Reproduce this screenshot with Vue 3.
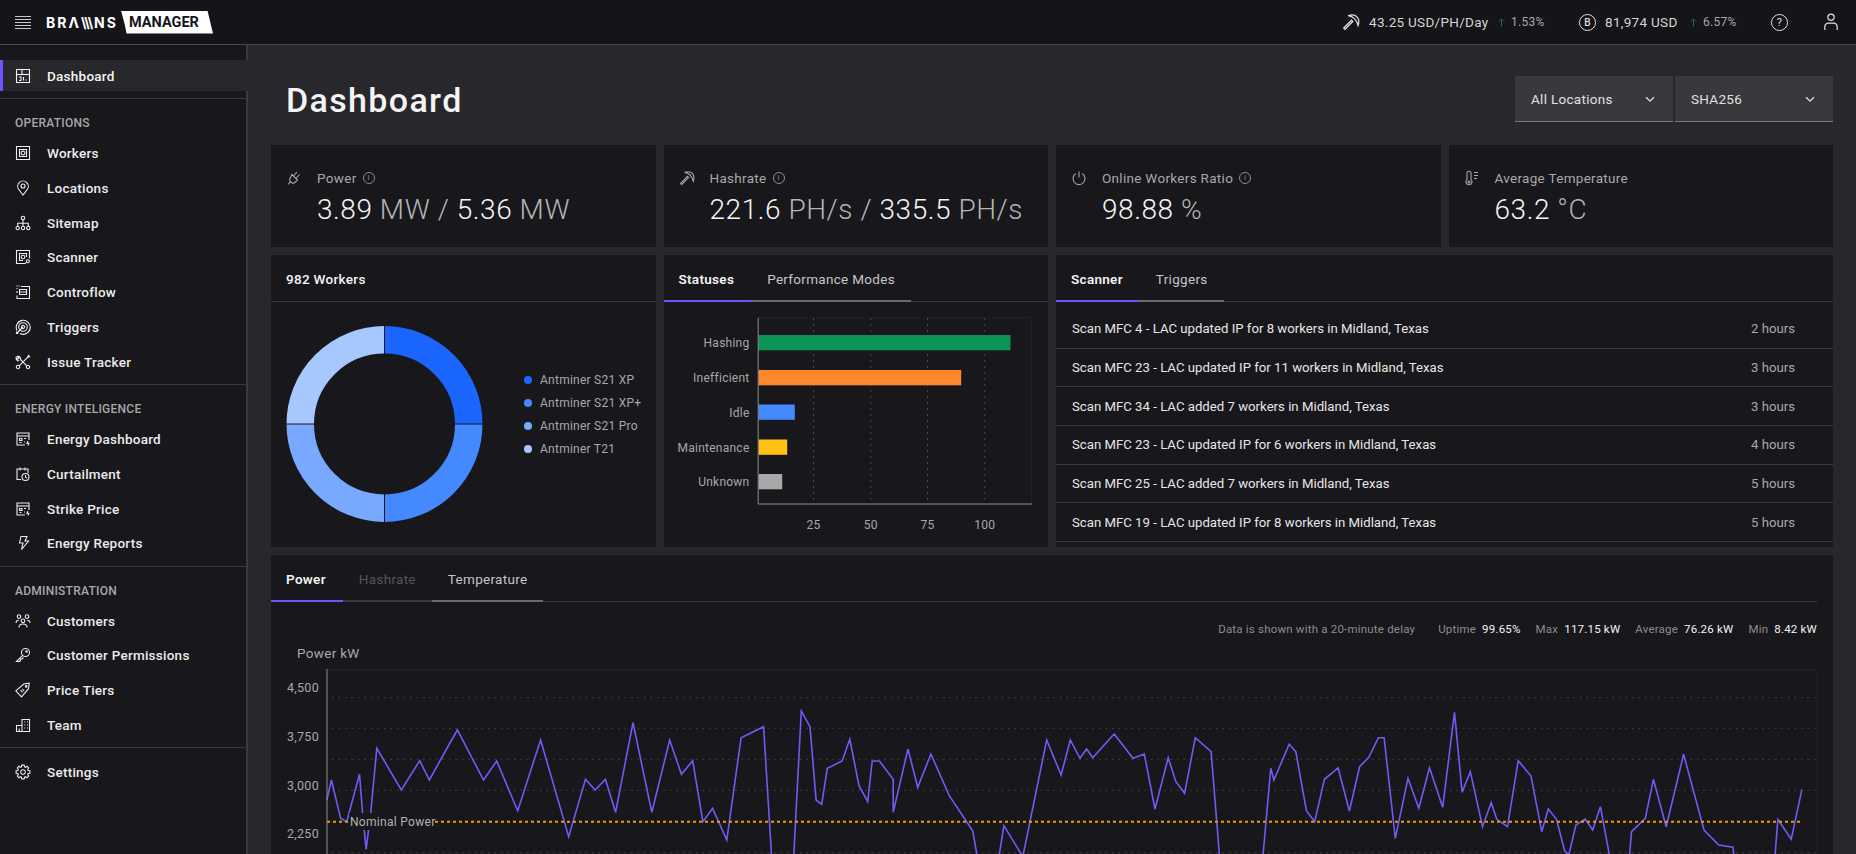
<script setup>
import { h } from 'vue'

const c = (x, y, r) => `M${x - r} ${y}a${r} ${r} 0 1 0 ${2 * r} 0a${r} ${r} 0 1 0 ${-2 * r} 0`
const gear = () => {
  let d = ''
  for (let i = 0; i < 8; i++) {
    const a = (i * Math.PI) / 4
    const pts = [[-0.3, 5.3], [-0.17, 7], [0.17, 7], [0.3, 5.3]]
    pts.forEach(([o, r]) => {
      d += (d ? 'L' : 'M') + (8 + r * Math.cos(a + o)).toFixed(2) + ' ' + (8 + r * Math.sin(a + o)).toFixed(2)
    })
  }
  return d + 'z'
}
const energy = ['M14 9V2H2v12h8', 'M2 5h12', 'M4.5 7.5h2.5v2h-2.5zM4.5 11.5h2M9 7.5h2M9 11h1', 'M13 10l-1.2 2.2h2.2L12.8 14.5']
const icons = {
  dashboard: ['M1.5 1.5h13v13h-13z', 'M1.5 6.5h13', 'M7 1.5v5', 'M4 12.5h2v-3.5H4M8.5 12.5V9M11 12.5v-1'],
  workers: ['M1.5 1.5h13v13h-13z', 'M4.5 4.5h7v7h-7z', c(8, 8, 1.9)],
  pin: ['M8 15L3.8 9.5A5.3 5.3 0 1 1 12.2 9.5z', c(8, 6, 2)],
  sitemap: [c(8, 3, 1.7), c(2.7, 13, 1.7), c(8, 13, 1.7), c(13.3, 13, 1.7), 'M8 4.7v6.6M2.7 11.3V8.3h10.6v3'],
  scanner: ['M10 14.5H1.5v-13h13v8', 'M11.5 8V4.5h-7v7H8', c(8, 8, 1.8), c(12.8, 12.3, 1.5), 'M11.6 13.4l-1.6 1.2'],
  flow: ['M6 2.5h8.5v12H2v-3', 'M2 9V7M2 5V4M2 2.5v-1M4 1.5v1', 'M4.5 5.5h7V8h-7zM4.5 8h7v2.5h-7z'],
  target: ['M2 11.5A7 7 0 1 1 5 14.5', c(8, 8, 4.3), c(8, 8, 1.6), 'M8 8L1.5 14.5M1.5 12.5v2h2'],
  tools: ['M4.2 11.8L12.5 3.5l1-2 1 1-2 1', 'M11.8 11.8L5.5 5.5c.5-2-1-3.5-3.2-3.2l1.7 1.7-1.2 1.2-1.7-1.7c-.3 2.2 1.2 3.7 3.2 3.2', c(3, 13, 1.7), c(13, 13, 1.7)],
  energy,
  curtail: ['M6 13.5H2V3h11v4', 'M5 1.5v3M10 1.5v3', c(10.5, 11, 3.5), 'M10.5 9v2.2l1.5.8'],
  bolt: ['M6 1.5h6L10 6h3.5L6.5 14.5l1.5-6.5H4.5z'],
  customers: [c(4, 3.6, 1.8), c(12, 3.6, 1.8), c(8, 7.8, 1.8), 'M1 10c0-1.7 1.2-2.8 2.8-2.8', 'M15 10c0-1.7-1.2-2.8-2.8-2.8', 'M4 14.5c0-2.4 1.8-3.5 4-3.5s4 1.1 4 3.5'],
  key: [c(10.5, 5.5, 4), 'M7.6 8.4L1.5 14.5H4.5l1-1V12H7l1.5-1.5', c(11.5, 4.5, 0.8)],
  tag: ['M0.8 8.8L8.8 2l5.4-.8-.7 5.5-7 8.2z', c(11.2, 4.4, 0.8), 'M5.5 8.2l2 2.2M7.2 6.8l2 2.2'],
  team: ['M1.5 14.5V8.5H7v6zM7 14.5V2.5h7.5v12zM9.3 5h1M12 5h1M9.3 8h1M12 8h1M9.3 11h1M12 11h1M4.2 14.5v-3'],
  gear: [gear(), c(8, 8, 2.3)],
  pick: ['M1.5 13.4l1.1 1.1L9.6 7.5 8.5 6.4z', 'M5.5 2.4c3.4-1.2 6.4-.4 7.8 1 1.4 1.4 2.2 4.4 1 7.8-.6-2.6-1.8-4.7-3.2-6.2C9.6 3.6 8 2.8 5.5 2.4z'],
  plug: ['M6 4.5l5.5 5.5-2 2c-1.5 1.5-3.5 1.2-4.8 0s-1.5-3.3 0-4.8z', 'M4.5 11.5l-2.5 3', 'M7.5 6L11 2M10 8.5l3.5-4'],
  power: ['M8 1.5v6', 'M4.8 3.5a6 6 0 1 0 6.4 0'],
  temp: ['M3 9.5V3.2a2 2 0 0 1 4 0v6.3a3 3 0 1 1-4 0z', c(5, 12, 1), 'M10 2.5h4M10 5.5h4M10 8.5h3'],
  user: [c(8, 3.8, 2.8), 'M2.5 15v-2.5c0-2 1.5-3.5 3.5-3.5h4c2 0 3.5 1.5 3.5 3.5V15'],
  chevron: ['M3.5 6L8 10.5 12.5 6'],
  up: ['M8 14V3M4 7l4-4 4 4'],
}
const Ico = (props) =>
  h('svg', { viewBox: '0 0 16 16', width: props.size || 16, height: props.size || 16, fill: 'none', stroke: 'currentColor', 'stroke-width': props.sw || 1.1, class: 'ico' },
    icons[props.name].map((d) => h('path', { d })))

const sections = [
  { label: 'OPERATIONS', items: [['workers', 'Workers'], ['pin', 'Locations'], ['sitemap', 'Sitemap'], ['scanner', 'Scanner'], ['flow', 'Controflow'], ['target', 'Triggers'], ['tools', 'Issue Tracker']] },
  { label: 'ENERGY INTELIGENCE', items: [['energy', 'Energy Dashboard'], ['curtail', 'Curtailment'], ['energy', 'Strike Price'], ['bolt', 'Energy Reports']] },
  { label: 'ADMINISTRATION', items: [['customers', 'Customers'], ['key', 'Customer Permissions'], ['tag', 'Price Tiers'], ['team', 'Team']] },
]
const metrics = [
  { icon: 'plug', label: 'Power', info: true, parts: [['3.89', ' MW / '], ['5.36', ' MW']] },
  { icon: 'pick', label: 'Hashrate', info: true, parts: [['221.6', ' PH/s / '], ['335.5', ' PH/s']] },
  { icon: 'power', label: 'Online Workers Ratio', info: true, parts: [['98.88', ' %']] },
  { icon: 'temp', label: 'Average Temperature', info: false, parts: [['63.2', ' °C']] },
]
const legend = [['#1a66ff', 'Antminer S21 XP'], ['#4589ff', 'Antminer S21 XP+'], ['#78a9ff', 'Antminer S21 Pro'], ['#a6c8ff', 'Antminer T21']]
const arc = (a, b) => {
  const R = 84.25, p = (t) => `${(384.5 + R * Math.sin(t)).toFixed(2)} ${(424 - R * Math.cos(t)).toFixed(2)}`
  return `M${p(a)}A${R} ${R} 0 0 1 ${p(b)}`
}
const donut = legend.map(([col], i) => ({ col, d: arc((i * Math.PI) / 2, ((i + 1) * Math.PI) / 2) }))
const bars = [
  ['Hashing', 1010, 335, '#0b9455'],
  ['Inefficient', 960.7, 370, '#ff882b'],
  ['Idle', 794.3, 404.5, '#4589ff'],
  ['Maintenance', 786.7, 439.5, '#ffc212'],
  ['Unknown', 781.7, 474, '#a8a8a8'],
]
const xticks = [[813, '25'], [870.3, '50'], [927, '75'], [984.3, '100']]
const scans = [
  ['Scan MFC 4 - LAC updated IP for 8 workers in Midland, Texas', '2 hours'],
  ['Scan MFC 23 - LAC updated IP for 11 workers in Midland, Texas', '3 hours'],
  ['Scan MFC 34 - LAC added 7 workers in Midland, Texas', '3 hours'],
  ['Scan MFC 23 - LAC updated IP for 6 workers in Midland, Texas', '4 hours'],
  ['Scan MFC 25 - LAC added 7 workers in Midland, Texas', '5 hours'],
  ['Scan MFC 19 - LAC updated IP for 8 workers in Midland, Texas', '5 hours'],
]
const stats = [['Uptime', '99.65%'], ['Max', '117.15 kW'], ['Average', '76.26 kW'], ['Min', '8.42 kW']]

const z8 = [[131,750],[140,690],[158,805],[170,815],[195,673],[201,790],[208,898],[217,790],[229,595],[277,720],[313,632],[332,690],[370,585],[387,540],[438,690],[464,633],[505,782],[550,570],[605,860],[638,688],[657,720],[677,688],[697,787],[731,518],[768,787],[803,570],[826,673],[848,632],[868,815],[887,775],[915,870],[943,563],[987,530],[1010,1100],[1040,1100],[1061,483],[1078,530],[1090,750],[1101,763],[1112,655],[1141,633],[1156,568],[1174,707],[1191,755],[1200,633],[1214,633],[1241,688],[1241,787],[1270,597],[1289,712],[1315,612],[1351,737],[1397,843],[1415,1000],[1440,1000],[1458,827],[1495,920],[1542,570]]
const z9 = [[10,675],[28,570],[47,625],[60,597],[72,623],[114,552],[151,625],[173,612],[194,777],[220,623],[235,695],[252,730],[273,563],[304,605],[330,1100],[395,1100],[421,655],[427,690],[457,583],[470,605],[491,783],[507,815],[526,688],[553,654],[575,783],[595,650],[613,622],[632,563],[643,563],[665,865],[690,685],[711,775],[732,653],[758,772],[781,487],[796,727],[812,665],[836,830],[853,758],[864,808],[885,830],[906,632],[931,678],[952,845],[965,777],[981,808],[997,903],[1005,915],[1019,825],[1037,807],[1052,840],[1067,770],[1095,1000],[1120,1000],[1128,845],[1155,805],[1171,688],[1196,830],[1230,613],[1270,840],[1299,885],[1327,892],[1335,1000],[1405,1000],[1415,808],[1441,868],[1462,718]]
const linePts = [
  ...z8.map(([x, y]) => `${(260 + x / 1.96).toFixed(1)},${(550 + y / 3).toFixed(1)}`),
  ...z9.map(([x, y]) => `${(1056 + x / 1.96).toFixed(1)},${(550 + y / 3).toFixed(1)}`),
].join(' ')
const yticks = [[687.7, '4,500'], [736, '3,750'], [785, '3,000'], [833, '2,250']]
const grid = [697.7, 728.3, 759.3, 790.3, 821.7, 852.7]
</script>

<template>
  <div class="app">
    <header class="topbar">
      <svg class="burger" viewBox="0 0 16 13" width="16" height="13" stroke="#c6c6c6" stroke-width="1"><path d="M0 .5h16M0 3.5h16M0 6.5h16M0 9.5h16M0 12.5h16" /></svg>
      <span class="logo">BRΛ<span class="slashes">\\\</span>NS</span>
      <span class="manager">MANAGER</span>
      <div class="ticker">
        <Ico name="pick" :size="18" class="tick-ico" />
        <span class="tick-val">43.25 USD/PH/Day</span>
        <Ico name="up" :size="11" class="tick-up" />
        <span class="tick-pct">1.53%</span>
        <span class="coin">B</span>
        <span class="tick-val">81,974 USD</span>
        <Ico name="up" :size="11" class="tick-up" />
        <span class="tick-pct">6.57%</span>
        <span class="help">?</span>
        <Ico name="user" :size="18" class="tick-user" />
      </div>
    </header>
    <div class="body">
      <aside class="sidebar">
        <div class="top-group">
          <a class="nav active"><Ico name="dashboard" /><span>Dashboard</span></a>
        </div>
        <section v-for="s in sections" :key="s.label" class="group">
          <h4>{{ s.label }}</h4>
          <a v-for="it in s.items" :key="it[1]" class="nav"><Ico :name="it[0]" /><span>{{ it[1] }}</span></a>
        </section>
        <div class="last-group">
          <a class="nav"><Ico name="gear" /><span>Settings</span></a>
        </div>
      </aside>
      <main class="main">
        <div class="head">
          <h1>Dashboard</h1>
          <div class="selects">
            <div class="select"><span>All Locations</span><Ico name="chevron" :size="14" :sw="1.5" /></div>
            <div class="select"><span>SHA256</span><Ico name="chevron" :size="14" :sw="1.5" /></div>
          </div>
        </div>
        <div class="grid-4">
          <div v-for="m in metrics" :key="m.label" class="card metric">
            <Ico :name="m.icon" class="m-ico" />
            <div>
              <div class="m-label">{{ m.label }}<span v-if="m.info" class="info">i</span></div>
              <div class="m-value"><template v-for="(p, i) in m.parts" :key="i"><span class="w">{{ p[0] }}</span><span class="g">{{ p[1] }}</span></template></div>
            </div>
          </div>
        </div>
        <div class="grid-row2">
          <div class="card">
            <div class="card-title">982 Workers</div>
            <div class="donut-wrap">
              <svg class="donut" viewBox="286 326 197 197" width="197" height="197">
                <path v-for="d in donut" :key="d.col" :d="d.d" fill="none" :stroke="d.col" stroke-width="27.5" />
                <path d="M384.5 326v28M384.5 494v29M286 424h28M455 424h28" stroke="#18171b" stroke-width="1" />
              </svg>
              <ul class="legend">
                <li v-for="l in legend" :key="l[1]"><i :style="{ background: l[0] }"></i>{{ l[1] }}</li>
              </ul>
            </div>
          </div>
          <div class="card">
            <div class="tabs">
              <span class="tab on">Statuses</span>
              <span class="tab line">Performance Modes</span>
            </div>
            <svg class="bar-svg" viewBox="663.5 302 385 245" width="385" height="245">
              <path d="M757.7 317.7H1031V504" stroke="#232226" fill="none" />
              <path v-for="t in xticks" :key="t[1]" :d="`M${t[0]} 318V504`" stroke="#4a494d" stroke-dasharray="2 4" />
              <rect v-for="b in bars" :key="b[0]" :x="758" :y="b[2]" :width="b[1] - 758" height="15.3" :fill="b[3]" />
              <path d="M757.7 317.7V504H1031.5" stroke="#8d8d8d" fill="none" />
              <text v-for="b in bars" :key="b[0] + 't'" x="749" :y="b[2] + 12" text-anchor="end" class="st">{{ b[0] }}</text>
              <text v-for="t in xticks" :key="t[1] + 't'" :x="t[0]" y="529" text-anchor="middle" class="st">{{ t[1] }}</text>
            </svg>
          </div>
          <div class="card span2">
            <div class="tabs">
              <span class="tab on">Scanner</span>
              <span class="tab line">Triggers</span>
            </div>
            <div class="scan-list">
              <div v-for="(s, i) in scans" :key="i" class="scan"><span>{{ s[0] }}</span><span class="time">{{ s[1] }}</span></div>
            </div>
          </div>
        </div>
        <div class="card power">
          <div class="tabs wide">
            <span class="tab on">Power</span>
            <span class="tab off">Hashrate</span>
            <span class="tab line">Temperature</span>
          </div>
          <div class="stats">
            <span class="note">Data is shown with a 20-minute delay</span>
            <span v-for="s in stats" :key="s[0]" class="stat">{{ s[0] }} <b>{{ s[1] }}</b></span>
          </div>
          <div class="chart-title">Power kW</div>
          <svg class="line-svg" viewBox="271 669 1562 190" width="1562" height="190">
            <path d="M327 669.5H1813a4 4 0 0 1 4 4V860" fill="none" stroke="#242327" />
            <path v-for="y in grid.filter((g) => g !== 821.7)" :key="y" :d="`M332 ${y}H1817`" stroke="#4a494d" stroke-dasharray="1.5 5" />
            <polyline :points="linePts" fill="none" stroke="#6d5cf6" stroke-width="1.6" stroke-linejoin="miter" />
            <path d="M327 821.7H1802" stroke="#e3a008" stroke-width="2" stroke-dasharray="3 3" />
            <rect x="349" y="813" width="85" height="17" fill="#18171b" />
            <text x="350" y="826" class="nominal">Nominal Power</text>
            <path d="M327 669V860" stroke="#8d8d8d" />
            <text v-for="t in yticks" :key="t[1]" x="319" :y="t[0] + 4.5" text-anchor="end" class="yt">{{ t[1] }}</text>
          </svg>
        </div>
      </main>
    </div>
  </div>
</template>

<style>
html, body { margin: 0; background: #28272b; overflow: hidden; }
</style>

<style scoped>
.app { width: 1856px; height: 854px; overflow: hidden; display: flex; flex-direction: column; background: #28272b; color: #f4f4f4; font-family: Roboto, "Liberation Sans", sans-serif; letter-spacing: .3px; }
.ico { display: block; flex: none; }
.topbar { height: 45px; box-sizing: border-box; flex: none; background: #151418; border-bottom: 1px solid #49484c; display: flex; align-items: center; padding-left: 15px; position: relative; }
.burger { margin-right: 15px; }
.logo { font-family: Inter, sans-serif; font-weight: 700; font-size: 14px; letter-spacing: 2px; color: #fff; width: 75px; white-space: nowrap; }
.slashes { letter-spacing: -1.3px; margin-right: 2px; }
.manager { background: #fff; color: #151418; font-weight: 700; font-size: 14.5px; letter-spacing: 0; height: 23px; width: 92px; box-sizing: border-box; padding: 1px 0 0 8px; line-height: 22px; clip-path: polygon(0 0, 94% 0, 100% 100%, 6% 100%, 4% 60%); }
.ticker { margin-left: auto; display: flex; align-items: center; color: #d4d4d4; font-size: 13.5px; }
.tick-ico { margin-right: 9px; color: #e0e0e0; }
.tick-val { width: 118px; white-space: nowrap; }
.tick-up { color: #0e8a50; margin: 0 4px 0 9px; }
.tick-pct { font-size: 12px; color: #a8a8a8; width: 35px; white-space: nowrap; }
.coin, .help { width: 15px; height: 15px; border: 1px solid #e0e0e0; border-radius: 50%; display: flex; align-items: center; justify-content: center; color: #e0e0e0; }
.coin { font-size: 10px; font-weight: 500; margin: 0 9px 0 33px; }
.coin + .tick-val { width: 74px; }
.help { font-size: 11px; margin-left: 33px; }
.tick-user { margin-left: 34px; margin-right: 16px; color: #e0e0e0; }
.body { flex: 1; display: flex; min-height: 0; }
.sidebar { width: 248px; box-sizing: border-box; flex: none; background: #18171b; border-right: 2px solid #3b3a3e; }
.top-group { padding-top: 15px; padding-bottom: 7px; }
.group { border-top: 1px solid #3b3a3e; padding-bottom: 4.8px; }
.group h4 { margin: 0; padding: 16px 0 4.6px 15px; font-size: 12px; line-height: 16px; font-weight: 500; color: #a8a8a8; letter-spacing: .25px; }
.last-group { border-top: 1px solid #3b3a3e; padding-top: 6px; }
.nav { height: 34.8px; display: flex; align-items: center; gap: 16px; padding-left: 15px; font-size: 13.5px; font-weight: 500; color: #ececec; letter-spacing: .25px; }
.nav.active { height: 31px; margin-right: -2px; background: #28272b; box-shadow: inset 3px 0 0 #6b55ff; color: #f4f4f4; }
.main { flex: 1; min-width: 0; padding: 0 23px; overflow: hidden; }
.head { height: 100px; display: flex; align-items: flex-start; justify-content: space-between; }
h1 { margin: 35px 0 0 15px; font-size: 34px; line-height: 40px; font-weight: 500; letter-spacing: 1.35px; color: #f4f4f4; }
.selects { margin-top: 31px; display: flex; gap: 2px; }
.select { width: 158px; height: 46px; box-sizing: border-box; background: #39383c; border-bottom: 1px solid #78777b; display: flex; align-items: center; justify-content: space-between; padding: 0 16px 0 16px; font-size: 13.5px; color: #e0e0e0; }
.card { background: #18171b; min-width: 0; }
.grid-4 { display: grid; grid-template-columns: repeat(4, 1fr); gap: 8px; height: 102px; }
.metric { display: flex; align-items: flex-start; padding: 25px 0 0 15px; gap: 15px; box-sizing: border-box; color: #a8a8a8; }
.m-ico { color: #a8a8a8; margin-top: 0; }
.m-label { font-size: 13.5px; line-height: 16px; display: flex; align-items: center; gap: 6px; color: #a8a8a8; }
.info { width: 10px; height: 10px; border: 1px solid #8d8d8d; border-radius: 50%; font-size: 8px; line-height: 10px; text-align: center; color: #8d8d8d; }
.m-value { margin-top: 7px; font-size: 28px; line-height: 34px; font-weight: 300; white-space: pre; letter-spacing: .55px; }
.w { color: #f4f4f4; }
.g { color: #b4b4b4; }
.grid-row2 { display: grid; grid-template-columns: repeat(4, 1fr); grid-template-rows: 292px; gap: 8px; margin-top: 8px; }
.span2 { grid-column: span 2; }
.card-title { height: 47px; box-sizing: border-box; border-bottom: 1px solid #3b3a3e; padding: 1px 15px 0; display: flex; align-items: center; font-size: 13.5px; font-weight: 500; }
.donut-wrap { position: relative; display: flex; align-items: flex-start; padding: 24px 0 0 15px; }
.donut { display: block; flex: none; }
.legend { list-style: none; margin: 42px 0 0 41px; padding: 0; font-size: 12px; color: #a8a8a8; }
.legend li { height: 23.2px; display: flex; align-items: center; gap: 8px; white-space: nowrap; letter-spacing: .25px; }
.legend i { width: 8px; height: 8px; border-radius: 50%; }
.tabs { height: 47px; box-sizing: border-box; border-bottom: 1px solid #3b3a3e; display: flex; align-items: stretch; }
.tabs.wide { margin-right: 16px; }
.tab { padding: 2px 16px 0; display: flex; align-items: center; font-size: 13.5px; color: #c6c6c6; margin-bottom: -1px; border-bottom: 2px solid #3b3a3e; white-space: nowrap; }
.tab.on { color: #f4f4f4; font-weight: 600; border-bottom-color: #6b55ff; padding-left: 15px; padding-right: 17px; }
.tab.line { border-bottom-color: #6a696d; }
.tab.off { color: #55545a; }
.bar-svg, .line-svg { display: block; }
.st { font-size: 12px; fill: #a8a8a8; letter-spacing: .25px; }
.scan-list { padding-top: 8px; }
.scan { height: 38.7px; box-sizing: border-box; border-bottom: 1px solid #3b3a3e; display: flex; align-items: center; justify-content: space-between; padding: 0 38px 0 16px; font-size: 13.2px; color: #e6e6e6; letter-spacing: 0; }
.time { color: #a8a8a8; }
.power { height: 320px; overflow: hidden; margin-top: 8px; }
.stats { margin: 18px 16px 0 0; height: 18px; display: flex; justify-content: flex-end; align-items: center; font-size: 11.5px; color: #8d8d8d; gap: 15px; letter-spacing: .2px; }
.note { margin-right: 8px; }
.stat b { font-weight: 400; color: #f4f4f4; margin-left: 3px; }
.chart-title { margin: 6px 0 0 26px; height: 18px; font-size: 13.5px; line-height: 18px; color: #a8a8a8; }
.line-svg { margin-top: 7px; }
.nominal { font-size: 12px; fill: #b4b4b4; }
.yt { font-size: 12.5px; fill: #a8a8a8; }
</style>
